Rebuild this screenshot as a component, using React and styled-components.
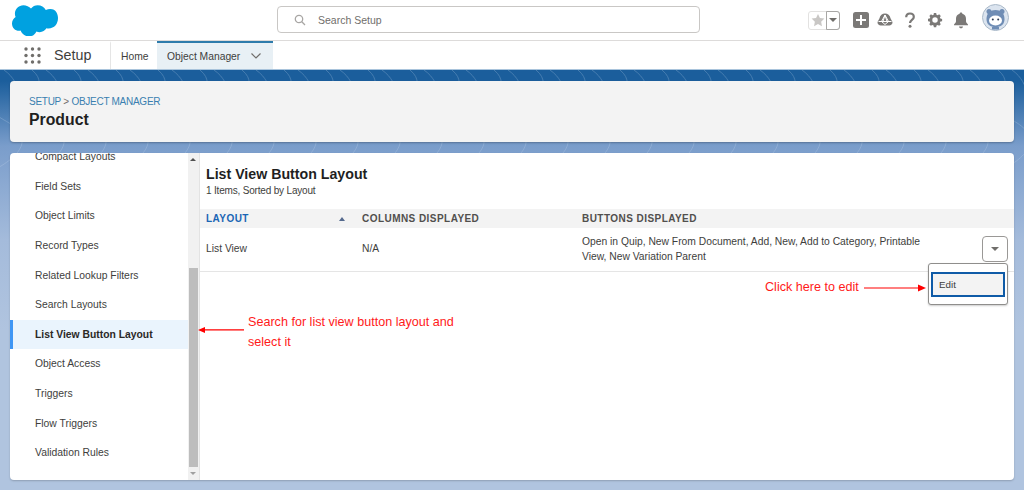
import React from "react";
import styled, { createGlobalStyle } from "styled-components";

const Global = createGlobalStyle`
  html, body { margin: 0; padding: 0; background: #fff; }
  body { font-family: "Liberation Sans", Arial, sans-serif; color: #3e3e3c; }
  * { box-sizing: border-box; }
`;

const Page = styled.div`
  position: relative;
  width: 1024px;
  height: 490px;
  overflow: hidden;
  display: flex;
  flex-direction: column;
`;

const TopBar = styled.header`
  height: 41px;
  flex: none;
  background: #fff;
  border-bottom: 1px solid #dddbda;
  display: flex;
  align-items: center;
  padding: 0 15px 0 12px;
`;

const Logo = styled.svg`
  width: 46px;
  height: 33px;
  flex: none;
  margin-top: -2px;
`;

const SearchBox = styled.div`
  width: 423px;
  height: 27px;
  margin-left: 219px;
  margin-top: -1px;
  border: 1px solid #c9c7c5;
  border-radius: 4px;
  display: flex;
  align-items: center;
  padding-left: 16px;
  gap: 12px;
  font-size: 10.5px;
  color: #706e6b;
`;

const TopActions = styled.div`
  margin-left: auto;
  display: flex;
  align-items: center;
`;

const FavGroup = styled.div`
  width: 32px;
  height: 19px;
  display: flex;
  border: 1px solid #e3e2e1;
  border-radius: 3px;
  margin-right: 12px;
`;

const FavStar = styled.div`
  width: 18px;
  display: flex;
  align-items: center;
  justify-content: center;
`;

const FavDrop = styled.div`
  flex: 1;
  border: 1px solid #a8a7a5;
  margin: -1px;
  border-radius: 0 3px 3px 0;
  display: flex;
  align-items: center;
  justify-content: center;
`;

const TinyCaret = styled.span`
  width: 0;
  height: 0;
  border-left: ${(p) => p.$w || 4}px solid transparent;
  border-right: ${(p) => p.$w || 4}px solid transparent;
  border-top: ${(p) => p.$h || 4}px solid #706e6b;
`;

const ActionIcon = styled.svg`
  width: 18px;
  height: 18px;
  margin-right: ${(p) => p.$gap}px;
  flex: none;
`;

const Avatar = styled.svg`
  width: 27px;
  height: 27px;
  margin-left: 12px;
  margin-top: -5px;
  flex: none;
`;

const NavBar = styled.nav`
  height: 28px;
  flex: none;
  background: #fff;
  display: flex;
  align-items: stretch;
`;

const AppLauncher = styled.svg`
  width: 17px;
  height: 17px;
  margin: 6px 0 0 24px;
  flex: none;
`;

const AppName = styled.div`
  width: 56px;
  margin-left: 13px;
  font-size: 14.3px;
  line-height: 28px;
  color: #3e3e3c;
`;

const Tab = styled.div`
  display: flex;
  align-items: center;
  font-size: 10.3px;
  color: #3e3e3c;
  padding: 0 10px;
  width: ${(p) => p.$w}px;
  border-left: ${(p) => (p.$active ? "none" : "1px solid #e5e5e5")};
  border-top: 2px solid ${(p) => (p.$active ? "#2d7bab" : "transparent")};
  background: ${(p) => (p.$active ? "#e8f0f5" : "#fff")};
`;

const TabChevron = styled.svg`
  width: 12px;
  height: 8px;
  margin-left: auto;
  margin-right: 1px;
`;

const Stage = styled.main`
  flex: 1;
  position: relative;
  border-top: 1px solid #a9c4dc;
  background: linear-gradient(180deg, #1b5e9c 0, #1b5e9c 11px, #7a9dcb 76px, #a4bbdb 170px, #b0c4df 260px);
  padding: 11px 10px 10px;
  display: flex;
  flex-direction: column;
  gap: 11px;
`;

const Topo = styled.svg`
  position: absolute;
  left: 0;
  top: 0;
  width: 1024px;
  height: 100px;
  opacity: 0.3;
`;

const HeaderCard = styled.section`
  position: relative;
  height: 61px;
  flex: none;
  background: #f3f3f3;
  border-radius: 4px;
  box-shadow: 0 1px 2px rgba(0, 0, 0, 0.25);
  padding: 15px 19px;
`;

const Crumbs = styled.div`
  font-size: 10px;
  letter-spacing: -0.27px;
  line-height: 12px;
  color: #706e6b;
  text-transform: uppercase;
  a { color: #3a7fb0; }
`;

const Title = styled.h1`
  margin: 2px 0 0;
  font-size: 15.8px;
  line-height: 19px;
  font-weight: 700;
  color: #1f1f1f;
`;

const Card = styled.section`
  position: relative;
  height: 327px;
  flex: none;
  background: #fff;
  border-radius: 4px;
  box-shadow: 0 1px 2px rgba(0, 0, 0, 0.2);
  display: flex;
  overflow: hidden;
`;

const Sidebar = styled.aside`
  width: 178px;
  flex: none;
  overflow: hidden;
`;

const SideList = styled.ul`
  list-style: none;
  margin: -11px 0 0;
  padding: 0;
`;

const SideItem = styled.li`
  height: 29.6px;
  display: flex;
  align-items: center;
  padding-left: 25px;
  font-size: 10.35px;
  font-weight: ${(p) => (p.$active ? 700 : 400)};
  color: ${(p) => (p.$active ? "#2b2826" : "#3e3e3c")};
  background: ${(p) => (p.$active ? "#eaf4fd" : "transparent")};
  border-left: ${(p) => (p.$active ? "3px solid #3f96f4" : "none")};
  ${(p) => p.$active && "padding-left: 22px;"}
`;

const Scrollbar = styled.div`
  width: 12px;
  flex: none;
  background: #f1f1f1;
  border-right: 1px solid #e3e3e3;
  display: flex;
  flex-direction: column;
  align-items: center;
  padding: 5px 1px 5px 0;
`;

const ScrollThumb = styled.div`
  width: 9px;
  height: 199px;
  margin-top: auto;
  margin-bottom: 5px;
  background: #bdbdbd;
`;

const UpArrow = styled.span`
  width: 0;
  height: 0;
  border-left: 3px solid transparent;
  border-right: 3px solid transparent;
  border-bottom: 3px solid #505050;
`;

const DownArrow = styled.span`
  width: 0;
  height: 0;
  border-left: 3px solid transparent;
  border-right: 3px solid transparent;
  border-top: 3px solid #a0a0a0;
`;

const Content = styled.div`
  flex: 1;
  min-width: 0;
  display: flex;
  flex-direction: column;
`;

const ContentHead = styled.div`
  height: 56px;
  flex: none;
  padding: 12px 6px 0;
`;

const ContentTitle = styled.h2`
  margin: 0;
  font-size: 14.2px;
  line-height: 19px;
  font-weight: 700;
  color: #1f1f1f;
`;

const ContentSub = styled.div`
  margin-top: 1px;
  font-size: 10px;
  letter-spacing: -0.18px;
  line-height: 12px;
  color: #3e3e3c;
`;

const Row = styled.div`
  display: grid;
  grid-template-columns: 156px 220px 1fr;
  padding-left: 6px;
  align-items: center;
`;

const HeadRow = styled(Row)`
  height: 19px;
  padding-bottom: 1px;
  background: #f3f3f3;
`;

const HeadCell = styled.div`
  position: relative;
  font-size: 10px;
  font-weight: 700;
  letter-spacing: 0.45px;
  color: ${(p) => (p.$sorted ? "#1a65b5" : "#514f4d")};
  text-transform: uppercase;
`;

const SortCaret = styled.span`
  position: absolute;
  right: 17px;
  top: 4px;
  width: 0;
  height: 0;
  border-left: 3px solid transparent;
  border-right: 3px solid transparent;
  border-bottom: 4px solid #54698d;
`;

const BodyRow = styled(Row)`
  position: relative;
  height: 44px;
  padding-bottom: 2px;
  border-bottom: 1px solid #e5e5e5;
`;

const BodyCell = styled.div`
  font-size: 10.3px;
  line-height: 15px;
  color: #3e3e3c;
  ${(p) => p.$wide && "width: 345px;"}
`;

const RowMenuBtn = styled.div`
  position: absolute;
  left: 782px;
  top: 8px;
  width: 26px;
  height: 26px;
  background: #fff;
  border: 1px solid #9a9896;
  border-radius: 4px;
  display: flex;
  align-items: center;
  justify-content: center;
`;

const Menu = styled.div`
  position: absolute;
  left: 728px;
  top: 35px;
  width: 80px;
  height: 42px;
  background: #fff;
  border: 1px solid #8f8e8c;
  border-radius: 3px;
  padding: 8px 2px 0;
  box-shadow: 0 1px 2px rgba(0, 0, 0, 0.2);
  z-index: 2;
`;

const MenuItem = styled.div`
  height: 25px;
  background: #f3f3f3;
  border: 2px solid #0f5ba7;
  display: flex;
  align-items: center;
  padding-left: 6px;
  font-size: 9.8px;
  color: #3e3e3c;
`;

const Note = styled.div`
  position: absolute;
  left: ${(p) => p.$x}px;
  top: ${(p) => p.$y}px;
  width: ${(p) => p.$w}px;
  font-size: 12.6px;
  line-height: 20px;
  color: #ff1a1a;
`;

const Arrow = styled.svg`
  position: absolute;
  left: ${(p) => p.$x}px;
  top: ${(p) => p.$y}px;
`;

const items = ["Compact Layouts", "Field Sets", "Object Limits", "Record Types", "Related Lookup Filters", "Search Layouts", "List View Button Layout", "Object Access", "Triggers", "Flow Triggers", "Validation Rules"];

const topoPaths = [];
for (let i = 0; i < 26; i++) {
  const x = i * 42 - 10;
  topoPaths.push(`M${x} 0 C${x + 22} 18 ${x - 16} 34 ${x + 14} 50 S${x + 34} 84 ${x + 4} 100`);
  topoPaths.push(`M${x + 14} 0 C${x + 34} 14 ${x + 26} 34 ${x + 44} 50`);
}

export default function App() {
  return (
    <>
      <Global />
      <Page>
        <TopBar>
          <Logo viewBox="0 0 46 33">
            <path fill="#00a1e0" d="M19 5.500C20.600 3.400 23 2.200 25.700 2.200c3.500 0 6.500 1.900 8.100 4.800 1.400-.6 2.900-1 4.500-1C44 6 46 11 46 15.100 46 21 42.400 25.500 36.500 25.500c-.7 0-1.400-.1-2.100-.2-1.300 2.300-3.800 3.900-6.700 3.900-1.200 0-2.300-.3-3.300-.8-1.300 3.100-4.400 5.200-7.900 5-3.700-.1-6.800-2.500-7.900-5.800-.5.1-1 .2-1.500.2C3.100 27.800 0 24.500 0 20.400c0-2.700 1.500-5.100 3.600-6.400-.4-1-.7-2.100-.7-3.300C2.900 6 6.700 2.200 11.400 2.200c3 0 5.800 1.300 7.600 3.300z" />
          </Logo>
          <SearchBox>
            <svg width="12" height="12" viewBox="0 0 12 12" fill="none" stroke="#a8a6a4" strokeWidth="1.300">
              <circle cx="5" cy="5" r="3.700" />
              <path d="M7.800 7.800L11 11" />
            </svg>
            <span>Search Setup</span>
          </SearchBox>
          <TopActions>
            <FavGroup>
              <FavStar>
                <svg width="14" height="14" viewBox="0 0 24 24"><path fill="#c9c7c5" d="M12 1.500l3.300 7 7.700 1-5.600 5.300 1.400 7.700-6.800-3.700-6.800 3.700 1.400-7.700L1 9.500l7.700-1z" /></svg>
              </FavStar>
              <FavDrop><TinyCaret /></FavDrop>
            </FavGroup>
            <ActionIcon $gap={6} viewBox="0 0 18 18">
              <rect x="1" y="1" width="16" height="16" rx="2.500" fill="#7b7977" />
              <path d="M9 4v10M4 9h10" stroke="#fff" strokeWidth="2" />
            </ActionIcon>
            <ActionIcon $gap={7} viewBox="0 0 18 18">
              <path fill="#7b7977" d="M9 2.500c2.700 0 5 2 5.500 4.700l2 3.800c.3 2-1.700 3.500-3.200 3.500H4.700C3.200 14.500 1.200 13 1.500 11l2-3.800C4 4.500 6.300 2.500 9 2.500z" />
              <path fill="none" stroke="#fff" strokeWidth="1" d="M2.500 10.500h13M9 4L5.500 10.500 9 13.500l3.500-3zM9 4l-2 6.500h4z" />
            </ActionIcon>
            <ActionIcon $gap={7} viewBox="0 0 18 18">
              <path fill="none" stroke="#7b7977" strokeWidth="2.200" d="M5.200 6.200C5.200 3.800 6.900 2.500 9 2.500s3.800 1.300 3.800 3.500c0 2.900-3.800 3-3.800 6" />
              <circle cx="9" cy="15.200" r="1.500" fill="#7b7977" />
            </ActionIcon>
            <ActionIcon $gap={8} viewBox="0 0 18 18">
              <g transform="translate(2 2) scale(.78)">
                <path fill="#7b7977" fillRule="evenodd" d="M7.500 0h3l.4 2.200 1.500.7 1.900-1.200 2.100 2.100-1.200 1.900.7 1.500 2.200.4v3l-2.200.4-.7 1.500 1.200 1.900-2.100 2.100-1.900-1.200-1.500.7-.4 2.200h-3l-.4-2.200-1.500-.7-1.900 1.200-2.100-2.100 1.200-1.900-.7-1.500L0 10.500v-3l2.200-.4.7-1.500-1.200-1.900 2.100-2.100 1.900 1.200 1.500-.7zM9 5.500a3.500 3.500 0 100 7 3.500 3.500 0 000-7z" />
              </g>
            </ActionIcon>
            <ActionIcon $gap={0} viewBox="0 0 18 18">
              <path fill="#7b7977" d="M9 1.500c.8 0 1.300.6 1.400 1.200 2.300.6 3.600 2.600 3.600 5v2.500c0 1.500 1.300 2.300 2 3.300v.7H2v-.7c.7-1 2-1.800 2-3.300V7.700c0-2.400 1.300-4.400 3.600-5 .1-.6.600-1.200 1.400-1.200zM7 15.500h4c0 1-1 1.800-2 1.800s-2-.8-2-1.800z" />
            </ActionIcon>
            <Avatar viewBox="0 0 27 27">
              <circle cx="13.500" cy="13.500" r="13" fill="#dbe4ef" stroke="#a9b8c8" strokeWidth="1" />
              <circle cx="7" cy="7.500" r="2.500" fill="#6f8db5" />
              <circle cx="20" cy="7.500" r="2.500" fill="#6f8db5" />
              <path fill="#6f8db5" d="M4.500 15c0-6 4-9 9-9s9 3 9 9c0 5.500-3.500 8-9 8s-9-2.500-9-8z" />
              <ellipse cx="13.500" cy="16.500" rx="6.500" ry="5" fill="#fff" />
              <circle cx="10.800" cy="15.500" r="1" fill="#2b3b55" />
              <circle cx="16.200" cy="15.500" r="1" fill="#2b3b55" />
              <path d="M10 23h7v2.500h-7z" fill="#6f8db5" />
            </Avatar>
          </TopActions>
        </TopBar>
        <NavBar>
          <AppLauncher viewBox="0 0 17 17" fill="#706e6b">
            {[2, 8.500, 15].flatMap((y) => [2, 8.500, 15].map((x) => <circle key={`${x}-${y}`} cx={x} cy={y} r="1.700" />))}
          </AppLauncher>
          <AppName>Setup</AppName>
          <Tab $w={47}>Home</Tab>
          <Tab $active $w={116}>
            Object Manager
            <TabChevron viewBox="0 0 12 8" fill="none" stroke="#706e6b" strokeWidth="1.200">
              <path d="M1.500 1.500L6 6l4.500-4.500" />
            </TabChevron>
          </Tab>
        </NavBar>
        <Stage>
          <Topo viewBox="0 0 1024 100" fill="none" stroke="#cfe0f2" strokeWidth="0.800">
            {topoPaths.map((d) => <path key={d} d={d} />)}
          </Topo>
          <HeaderCard>
            <Crumbs><a>Setup</a> &gt; <a>Object Manager</a></Crumbs>
            <Title>Product</Title>
          </HeaderCard>
          <Card>
            <Sidebar>
              <SideList>
                {items.map((t) => (
                  <SideItem key={t} $active={t === "List View Button Layout"}>{t}</SideItem>
                ))}
              </SideList>
            </Sidebar>
            <Scrollbar>
              <UpArrow />
              <ScrollThumb />
              <DownArrow />
            </Scrollbar>
            <Content>
              <ContentHead>
                <ContentTitle>List View Button Layout</ContentTitle>
                <ContentSub>1 Items, Sorted by Layout</ContentSub>
              </ContentHead>
              <HeadRow>
                <HeadCell $sorted>Layout<SortCaret /></HeadCell>
                <HeadCell>Columns Displayed</HeadCell>
                <HeadCell>Buttons Displayed</HeadCell>
              </HeadRow>
              <BodyRow>
                <BodyCell>List View</BodyCell>
                <BodyCell>N/A</BodyCell>
                <BodyCell $wide>Open in Quip, New From Document, Add, New, Add to Category, Printable View, New Variation Parent</BodyCell>
                <RowMenuBtn><TinyCaret $w={4} $h={4} /></RowMenuBtn>
                <Menu><MenuItem>Edit</MenuItem></Menu>
              </BodyRow>
            </Content>
          </Card>
        </Stage>
        <Note $x={248} $y={312} $w={230}>Search for list view button layout and select it</Note>
        <Note $x={765} $y={277} $w={110}>Click here to edit</Note>
        <Arrow $x={198} $y={325} width="48" height="10" viewBox="0 0 48 10">
          <path d="M46 4.800H6" stroke="#f00" strokeWidth="1.200" />
          <path d="M0 5l7-3v6z" fill="#f00" />
        </Arrow>
        <Arrow $x={863} $y={283} width="64" height="10" viewBox="0 0 64 10">
          <path d="M1 5h55" stroke="#f00" strokeWidth="1.200" />
          <path d="M63 5l-8-3.500v7z" fill="#f00" />
        </Arrow>
      </Page>
    </>
  );
}
